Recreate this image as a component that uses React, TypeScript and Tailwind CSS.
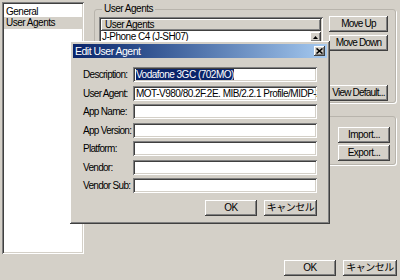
import React from 'react';

const raised =
  'bg-[#d4d0c8] shadow-[inset_-1px_-1px_#404040,inset_1px_1px_#ffffff,inset_-2px_-2px_#808080,inset_2px_2px_#d4d0c8]';
const sunken =
  'bg-white shadow-[inset_1px_1px_#808080,inset_-1px_-1px_#ffffff,inset_2px_2px_#404040,inset_-2px_-2px_#d4d0c8]';

const Btn = ({ label, w }: { label: string; w: string }) => (
  <div className={`${raised} ${w} h-[16px] shrink-0 flex items-center justify-center whitespace-nowrap text-black leading-none`}>
    {label}
  </div>
);

const FIELDS = [
  { label: 'Description:', value: 'Vodafone 3GC (702MO)', selected: true },
  { label: 'User Agent:', value: 'MOT-V980/80.2F.2E. MIB/2.2.1 Profile/MIDP-2.0 Configuration/CLDC-1.1' },
  { label: 'App Name:', value: '' },
  { label: 'App Version:', value: '' },
  { label: 'Platform:', value: '' },
  { label: 'Vendor:', value: '' },
  { label: 'Vendor Sub:', value: '' },
];

export default function App() {
  return (
    <div
      className="relative w-[400px] h-[280px] overflow-hidden bg-[#d4d0c8] text-[10px] tracking-[-0.5px] text-black"
      style={{ fontFamily: '"Liberation Sans", "Noto Sans CJK JP", sans-serif' }}
    >
      <div className="flex h-[256px]">
        {/* left tree/list */}
        <div className={`${sunken} ml-[2px] mt-[2px] w-[82px] h-[252px] p-[2px]`}>
          <div className="h-[11px] pl-[2px] leading-[11px] mt-[2px]">General</div>
          <div className="h-[12px] pl-[2px] leading-[12px] bg-[#d4d0c8]">User Agents</div>
        </div>

        <div className="flex flex-col ml-[10px] w-[302px]">
          {/* group 1 */}
          <fieldset className="mt-[3px] h-[100px] border border-[#b8b4ac] rounded-[3px] shadow-[1px_1px_#ffffff] pl-[4px] pr-[6px]">
            <legend className="ml-[3px] px-[2px] leading-[12px]">User Agents</legend>
            <div className="flex gap-[6px] mt-[2px]">
              <div className={`${sunken} w-[224px] h-[80px] p-[2px] flex flex-col`}>
                <div className={`${raised} h-[12px] leading-[12px] pl-[4px]`}>User Agents</div>
                <div className="flex flex-1">
                  <div className="flex-1 pl-[1px] leading-[12px]">J-Phone C4 (J-SH07)</div>
                  <div className="w-[11px] bg-[#ece9e4] flex flex-col">
                    <div className={`${raised} h-[10px] mt-[1px] flex items-center justify-center`}>
                      <svg width="5" height="3" viewBox="0 0 5 3">
                        <path d="M2.5 0L5 3H0z" fill="#000" />
                      </svg>
                    </div>
                  </div>
                </div>
              </div>
              <div className="flex flex-col w-[59px] -mt-[1px] tracking-[-0.8px]">
                <Btn label="Move Up" w="w-[59px]" />
                <div className="h-[3px]" />
                <Btn label="Move Down" w="w-[59px]" />
                <div className="h-[34px]" />
                <Btn label="View Default..." w="w-[59px]" />
              </div>
            </div>
          </fieldset>

          {/* group 2 */}
          <div className="mt-[13px] h-[49px] border border-[#b8b4ac] rounded-[3px] shadow-[1px_1px_#ffffff] flex flex-col items-end pr-[5px] pt-[10px] gap-[2px]">
            <Btn label="Import..." w="w-[52px]" />
            <Btn label="Export..." w="w-[52px]" />
          </div>
        </div>
      </div>

      {/* bottom buttons */}
      <div className="flex justify-end gap-[7px] pr-[3px] pt-[4px]">
        <Btn label="OK" w="w-[52px]" />
        <Btn label="キャンセル" w="w-[54px]" />
      </div>

      {/* dialog window */}
      <div className={`${raised} absolute left-[70px] top-[41px] w-[260px] h-[183px] p-[3px] flex flex-col`}>
        <div className="h-[14px] bg-gradient-to-r from-[#0a246a] to-[#a6caf0] flex items-center justify-between pl-[2px] pr-[2px]">
          <span className="text-white text-[10.5px] leading-none">Edit User Agent</span>
          <div className={`${raised} w-[11px] h-[10px] flex items-center justify-center`}>
            <svg width="7" height="6" viewBox="0 0 7 6">
              <path d="M0.5 0.5L6.5 5.5M6.5 0.5L0.5 5.5" stroke="#000" strokeWidth="1.6" />
            </svg>
          </div>
        </div>

        <div className="flex flex-col gap-[3.5px] mt-[9px] pl-[10px] pr-[10px]">
          {FIELDS.map((f) => (
            <div key={f.label} className="flex items-center h-[15px]">
              <div className="w-[50px] shrink-0 whitespace-nowrap tracking-[-0.7px]">{f.label}</div>
              <div className={`${sunken} flex-1 h-[15px] overflow-hidden whitespace-nowrap pl-[3px] pr-[2px] flex items-center`}>
                {f.selected ? (
                  <span className="bg-[#0a246a] text-white leading-[11px]">{f.value}</span>
                ) : (
                  <span className="leading-[11px]">{f.value}</span>
                )}
              </div>
            </div>
          ))}
        </div>

        <div className="flex justify-end gap-[7px] mt-[7px] pr-[10px]">
          <Btn label="OK" w="w-[52px]" />
          <Btn label="キャンセル" w="w-[53px]" />
        </div>
      </div>
    </div>
  );
}
